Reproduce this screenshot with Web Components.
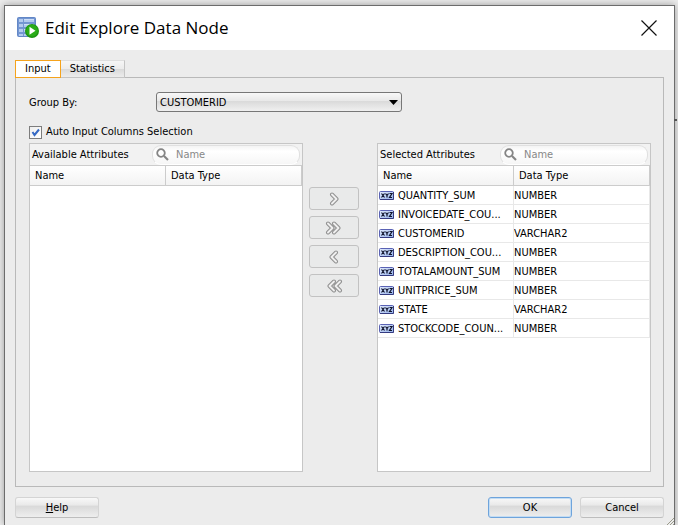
<!DOCTYPE html>
<html lang="en">
<head>
<meta charset="utf-8">
<title>Edit Explore Data Node</title>
<style>
html, body { margin: 0; height: 100%; }
body { background: #ededed; font: 11px/14px "DejaVu Sans Condensed", "DejaVu Sans", sans-serif; color: #000; overflow: hidden; }
</style>
</head>
<body>
<node-dialog heading="Edit Explore Data Node">
  <tab-panel>
    <group-by></group-by>
    <auto-select></auto-select>
    <attribute-shuttle></attribute-shuttle>
  </tab-panel>
  <push-button slot="help"><u>H</u>elp</push-button>
  <push-button slot="actions" primary>OK</push-button>
  <push-button slot="actions">Cancel</push-button>
</node-dialog>
<script>
const define = (name, html, setup) => customElements.define(name, class extends HTMLElement {
  constructor() {
    super();
    this.attachShadow({ mode: "open" });
  }
  connectedCallback() {
    const t = document.createElement("template");
    t.innerHTML = "<style>*{box-sizing:border-box}button,input,select{font:inherit;color:inherit;margin:0}:host{box-sizing:border-box}</style>" + html;
    this.shadowRoot.replaceChildren(t.content.cloneNode(true));
    if (setup) setup(this, this.shadowRoot);
  }
});

define("push-button", `
<style>
:host { display: block; width: 84px; }
button { display: block; width: 100%; height: 21px; padding: 0; border: 1px solid #d4d4d4; border-bottom-color: #bdbdbd; border-radius: 3px;
  background: linear-gradient(#f8f8f8, #e9e9e9 38%, #d9d9d9 42%, #eeeeee); }
:host([primary]) button { border: 1px solid #6ea4dc; box-shadow: inset 0 0 0 1px #c3dcf3; }
</style>
<button type="button"><slot></slot></button>`);

define("node-dialog", `
<style>
:host { display: flex; flex-direction: column; height: calc(100% - 5px); margin: 0 3px 0 4px; border: 1px solid #6c6c6c; border-bottom: 0;
  background: #ececec; box-shadow: 0 0 8px #999; position: relative; top: 5px; }
/* edge of the window that lies behind the dialog */
:host::after { content: ""; position: absolute; left: 100%; top: 113px; width: 3px; height: 2px; background: #555; }
header { display: flex; align-items: center; height: 44px; padding: 0 17px 0 12px; background: #fff; }
h1 { flex: 1; margin: 0 0 0 6px; font: 17px/24px "Open Sans", "Noto Sans", sans-serif; }
.close { display: block; border: 0; padding: 0; background: none; height: 16px; }
svg { display: block; }
main { flex: 1; min-height: 0; display: flex; flex-direction: column; padding: 10px 10px 0; }
footer { display: flex; gap: 8px; padding: 10px 10px 7px; }
.space { flex: 1; }
.grip { position: absolute; right: 0; bottom: 0; }
</style>
<header>
  <svg width="22" height="24" viewBox="0 0 22 24">
    <rect x="0.5" y="1.5" width="18" height="19" rx="1" fill="#7396d2" stroke="#6287c6"/>
    <path d="M2 3h4v3H2zM7 3h10v3H7zM2 8h4v3H2zM7 8h10v3H7zM2 13h4v3H2zM7 13h10v3H7zM2 18h4v2H2zM7 18h10v2H7z" fill="#b3cbef"/>
    <path d="M7 3h10v1H7zM7 8h10v1H7zM7 13h10v1H7z" fill="#cfdff6"/>
    <circle cx="15" cy="15" r="7" fill="#1f9412"/><circle cx="15" cy="14.600" r="5.800" fill="#2aac18"/>
    <path d="M12.500 10.800v8l6-4z" fill="#fff"/>
  </svg>
  <h1></h1>
  <button class="close" type="button" aria-label="Close"><svg width="16" height="16" viewBox="0 0 16 16"><path d="M.5.5l15 15M15.500.5l-15 15" stroke="#111" stroke-width="1.200"/></svg></button>
</header>
<main><slot></slot></main>
<footer><slot name="help"></slot><span class="space"></span><slot name="actions"></slot></footer>
<svg class="grip" width="8" height="8" viewBox="0 0 8 8"><path d="M1 8l7-7M4 8l4-4M7 8l1-1" stroke="#9b9b8b"/></svg>`,
(el, root) => { root.querySelector("h1").textContent = el.getAttribute("heading"); });

define("tab-panel", `
<style>
:host { flex: 1; min-height: 0; display: flex; flex-direction: column; }
nav { display: flex; position: relative; margin-bottom: -1px; }
button { height: 18px; padding: 0 9px; border: 1px solid #c4c4c4; border-left: 0; border-top-color: #dedede;
  background: linear-gradient(#f6f6f6, #ececec 48%, #dadada 52%, #ececec); }
button[aria-selected=true] { border: 1px solid #f5a31c; background: #fff; }
section { flex: 1; min-height: 0; display: flex; flex-direction: column; border: 1px solid #b9b9b9; padding: 14px 12px 14px 13px; }
</style>
<nav role="tablist"><button role="tab" aria-selected="true">Input</button><button role="tab" aria-selected="false">Statistics</button></nav>
<section role="tabpanel"><slot></slot></section>`);

define("group-by", `
<style>
:host { display: flex; align-items: center; }
label { width: 127px; padding-top: 2px; }
select { appearance: none; width: 246px; height: 20px; padding: 1px 20px 0 3px; border: 1px solid #777; border-radius: 3px;
  background: linear-gradient(#f8f8f8, #e9e9e9 42%, #dadada 46%, #f0f0f0); }
.box { display: grid; align-items: center; }
.box > * { grid-area: 1 / 1; }
svg { justify-self: end; margin-right: 4px; pointer-events: none; }
</style>
<label for="g">Group By:</label>
<span class="box"><select id="g"><option>CUSTOMERID</option></select>
<svg width="9" height="5" viewBox="0 0 9 5"><path d="M0 0h9L4.500 5z"/></svg></span>`);

define("auto-select", `
<style>
:host { display: flex; align-items: center; gap: 4px; margin: 13px 0 4px; }
input { appearance: none; width: 13px; height: 13px; border: 1px solid #7d7d7d; background: linear-gradient(135deg, #eee, #fff); }
.box { display: grid; place-items: center; }
.box > * { grid-area: 1 / 1; }
input:not(:checked) + svg { display: none; }
svg { pointer-events: none; }
</style>
<span class="box"><input id="a" type="checkbox" checked><svg width="9" height="9" viewBox="0 0 9 9"><path d="M1.500 4l2 3L8 1.500" fill="none" stroke="#3569c4" stroke-width="2"/></svg></span>
<label for="a">Auto Input Columns Selection</label>`);

define("attribute-list", `
<style>
:host { flex: 1; min-width: 0; display: flex; flex-direction: column; border: 1px solid #c6c6c6; background: #fff; }
.bar { display: flex; align-items: center; height: 22px; padding-left: 2px; background: #f2f2f2; border-bottom: 1px solid #ccc; }
.bar label { flex: 1; white-space: nowrap; }
.search { display: grid; align-items: center; width: 148px; margin-right: 2px; }
.search > * { grid-area: 1 / 1; }
.search svg { margin-left: 4px; pointer-events: none; }
input { width: 100%; height: 20px; padding: 0 8px 0 23px; border: 1px solid #e0e0e0; border-bottom-color: #fff; border-radius: 9px;
  background: linear-gradient(#f4f4f4, #fff 30%, #f6f6f6); outline: 0; }
input::placeholder { color: #888; opacity: 1; }
table { width: 100%; table-layout: fixed; border-collapse: separate; border-spacing: 0; }
th { height: 20px; padding: 0 5px; text-align: left; font-weight: 400; border-bottom: 1px solid #ccc; border-right: 1px solid #ccc; background: linear-gradient(#fff, #f3f3f3); }
td { height: 19px; padding: 2px 0 0; border-bottom: 1px solid #e8e8e8; border-right: 1px solid #e8e8e8; white-space: nowrap; overflow: hidden; }
.cell { display: flex; align-items: center; gap: 4px; padding-left: 1px; }
xyz-icon { margin-bottom: 2px; }
</style>
<div class="bar"><label for="s"></label><span class="search"><input id="s" type="text" placeholder="Name">
<svg width="13" height="13" viewBox="0 0 13 13"><circle cx="5" cy="5" r="3.800" fill="none" stroke="#858585" stroke-width="1.800"/><path d="M8 8l4 4" stroke="#858585" stroke-width="2.200"/></svg></span></div>
<table><thead><tr><th>Name</th><th>Data Type</th></tr></thead><tbody></tbody></table>`,
(el, root) => {
  root.querySelector("label").textContent = el.getAttribute("heading");
  root.querySelector("tbody").innerHTML = (el.getAttribute("rows") || "").split(" ").filter(Boolean).map(r => {
    const [name, type] = r.split("|");
    return `<tr><td><span class="cell"><xyz-icon></xyz-icon>${name}</span></td><td>${type}</td></tr>`;
  }).join("");
});

define("xyz-icon", `
<style>:host { display: block; width: 15px; height: 9px; } svg { display: block; }</style>
<svg width="15" height="9" viewBox="0 0 15 9" aria-hidden="true">
<defs><linearGradient id="b" x2="1" y2="1"><stop stop-color="#e4edff"/><stop offset="1" stop-color="#93b0ea"/></linearGradient></defs>
<rect x=".5" y=".5" width="14" height="8" rx="1" fill="url(#b)" stroke="#5a62b4"/>
<path d="M1 8.500h13.500V1" fill="none" stroke="#353b80"/>
<path d="M2.500 2.500l3 4m0-4l-3 4M6.500 2.500L8 4.500v2m1.500-4L8 4.500M10.500 2.500h2.500l-2.500 4h2.500" fill="none" stroke="#10142c" stroke-width="1.200"/></svg>`);

define("move-button", `
<style>
:host { display: block; }
button { display: grid; place-items: center; width: 100%; height: 23px; padding: 0; border: 1px solid #c2c2c2; border-radius: 3px; background: #e9eaea; }
:host([back]) svg { transform: scaleX(-1); }
</style>
<button type="button"><svg width="18" height="14" viewBox="0 0 18 14"></svg></button>`,
(el, root) => {
  const d = el.hasAttribute("all") ? "M3 2.500l4.500 4.500-4.500 4.500M9 2.500l4.500 4.500-4.500 4.500" : "M7 2.500l4.500 4.500-4.500 4.500";
  root.querySelector("svg").innerHTML = `<g fill="none" stroke-linecap="round" stroke-linejoin="round"><path d="${d}" stroke="#919191" stroke-width="4"/><path d="${d}" stroke="#efefef" stroke-width="1.900"/></g>`;
  root.querySelector("button").setAttribute("aria-label", el.getAttribute("label"));
});

define("attribute-shuttle", `
<style>
:host { flex: 1; min-height: 0; display: flex; }
.moves { width: 50px; margin: 44px 18px 0 6px; display: flex; flex-direction: column; gap: 6px; }
</style>
<attribute-list heading="Available Attributes"></attribute-list>
<div class="moves">
  <move-button label="Add"></move-button><move-button all label="Add all"></move-button>
  <move-button back label="Remove"></move-button><move-button back all label="Remove all"></move-button>
</div>
<attribute-list heading="Selected Attributes" rows="QUANTITY_SUM|NUMBER INVOICEDATE_COU...|NUMBER CUSTOMERID|VARCHAR2 DESCRIPTION_COU...|NUMBER TOTALAMOUNT_SUM|NUMBER UNITPRICE_SUM|NUMBER STATE|VARCHAR2 STOCKCODE_COUN...|NUMBER"></attribute-list>`);
</script>
</body>
</html>
